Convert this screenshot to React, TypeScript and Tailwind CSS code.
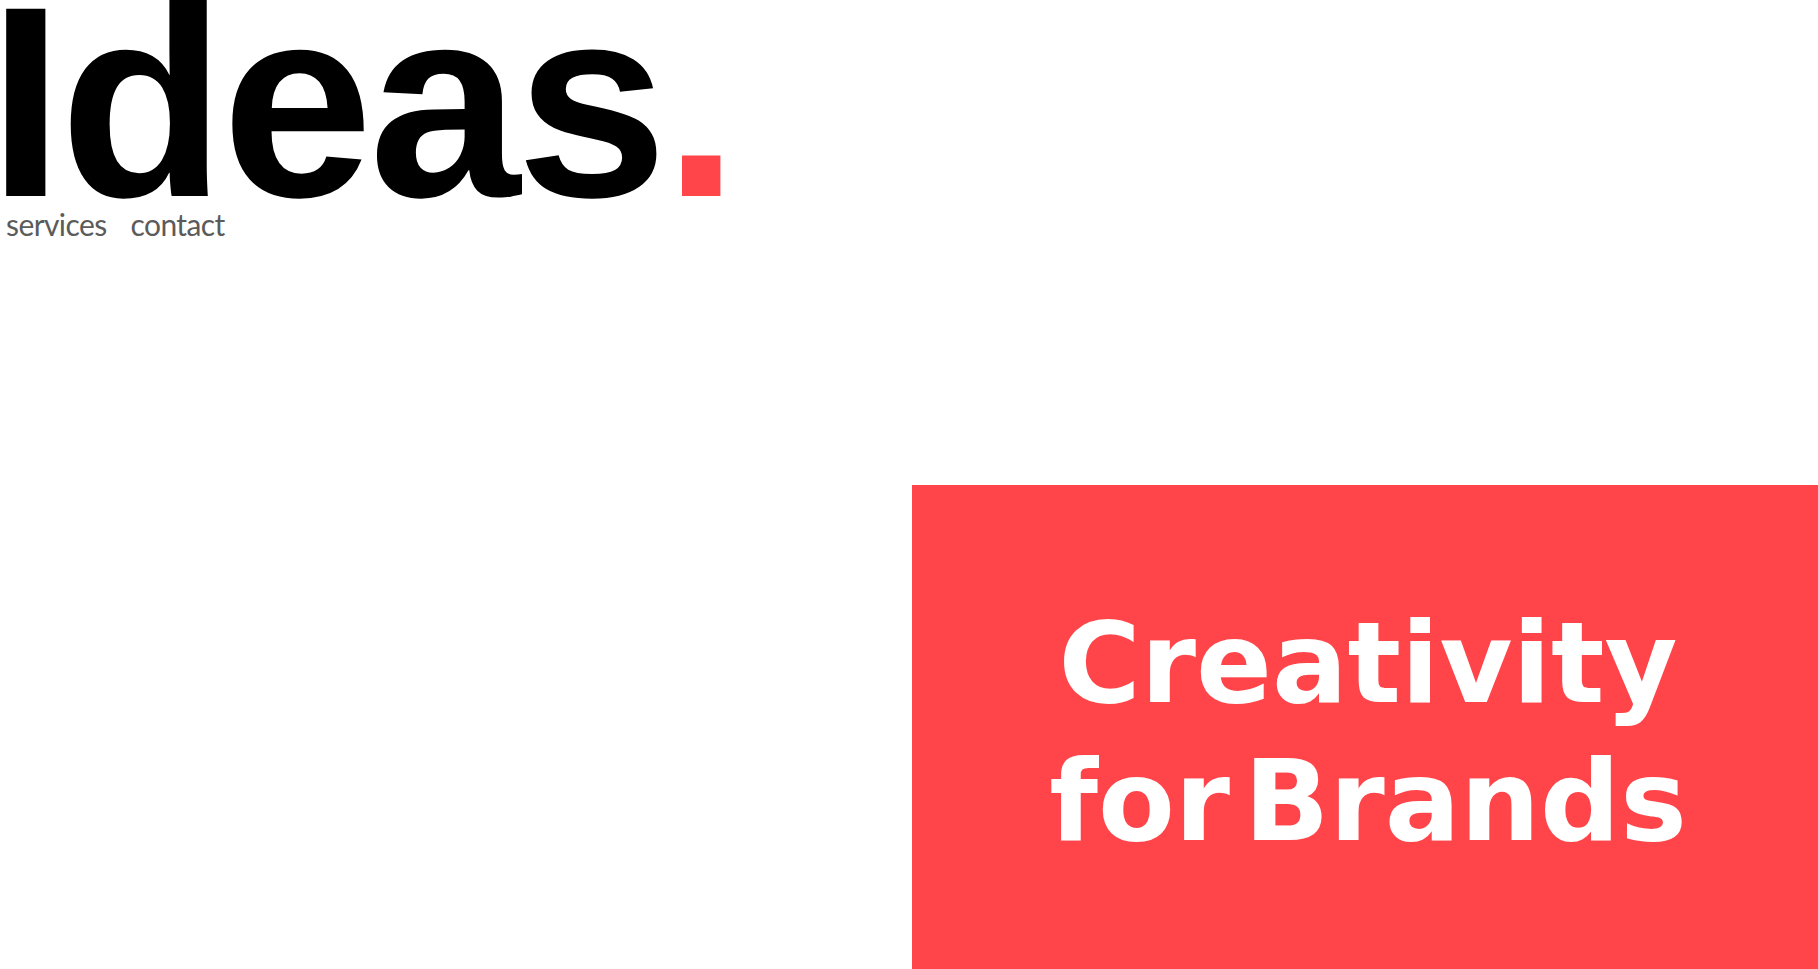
export default function App() {
  return (
    <div className="h-screen w-full overflow-hidden bg-white flex flex-col">
      <header className="h-[485px] shrink-0 pt-[1px]">
        <h1 className="-ml-[12px] text-[272px] leading-[203px] tracking-[-4px] font-bold text-black font-['Liberation_Sans',Arial,sans-serif]">
          Ideas<span className="text-[#ff4549]">.</span>
        </h1>
        <nav className="mt-[5px] pl-[6px] flex gap-[24px] text-[30px] leading-none tracking-[-0.6px] text-[#5b5b5b] font-['Lato',sans-serif]">
          <a href="#services">services</a>
          <a href="#contact">contact</a>
        </nav>
      </header>

      <div className="flex-1 flex justify-end">
        <section className="w-[906px] bg-[#ff4549] flex items-center justify-center pt-[10px] pl-[6px]">
          <h2 className="text-center text-white text-[112px] leading-[138px] font-bold [word-spacing:-25px] font-['DejaVu_Sans',sans-serif]">
            Creativity
            <br />
            for Brands
          </h2>
        </section>
      </div>
    </div>
  );
}
